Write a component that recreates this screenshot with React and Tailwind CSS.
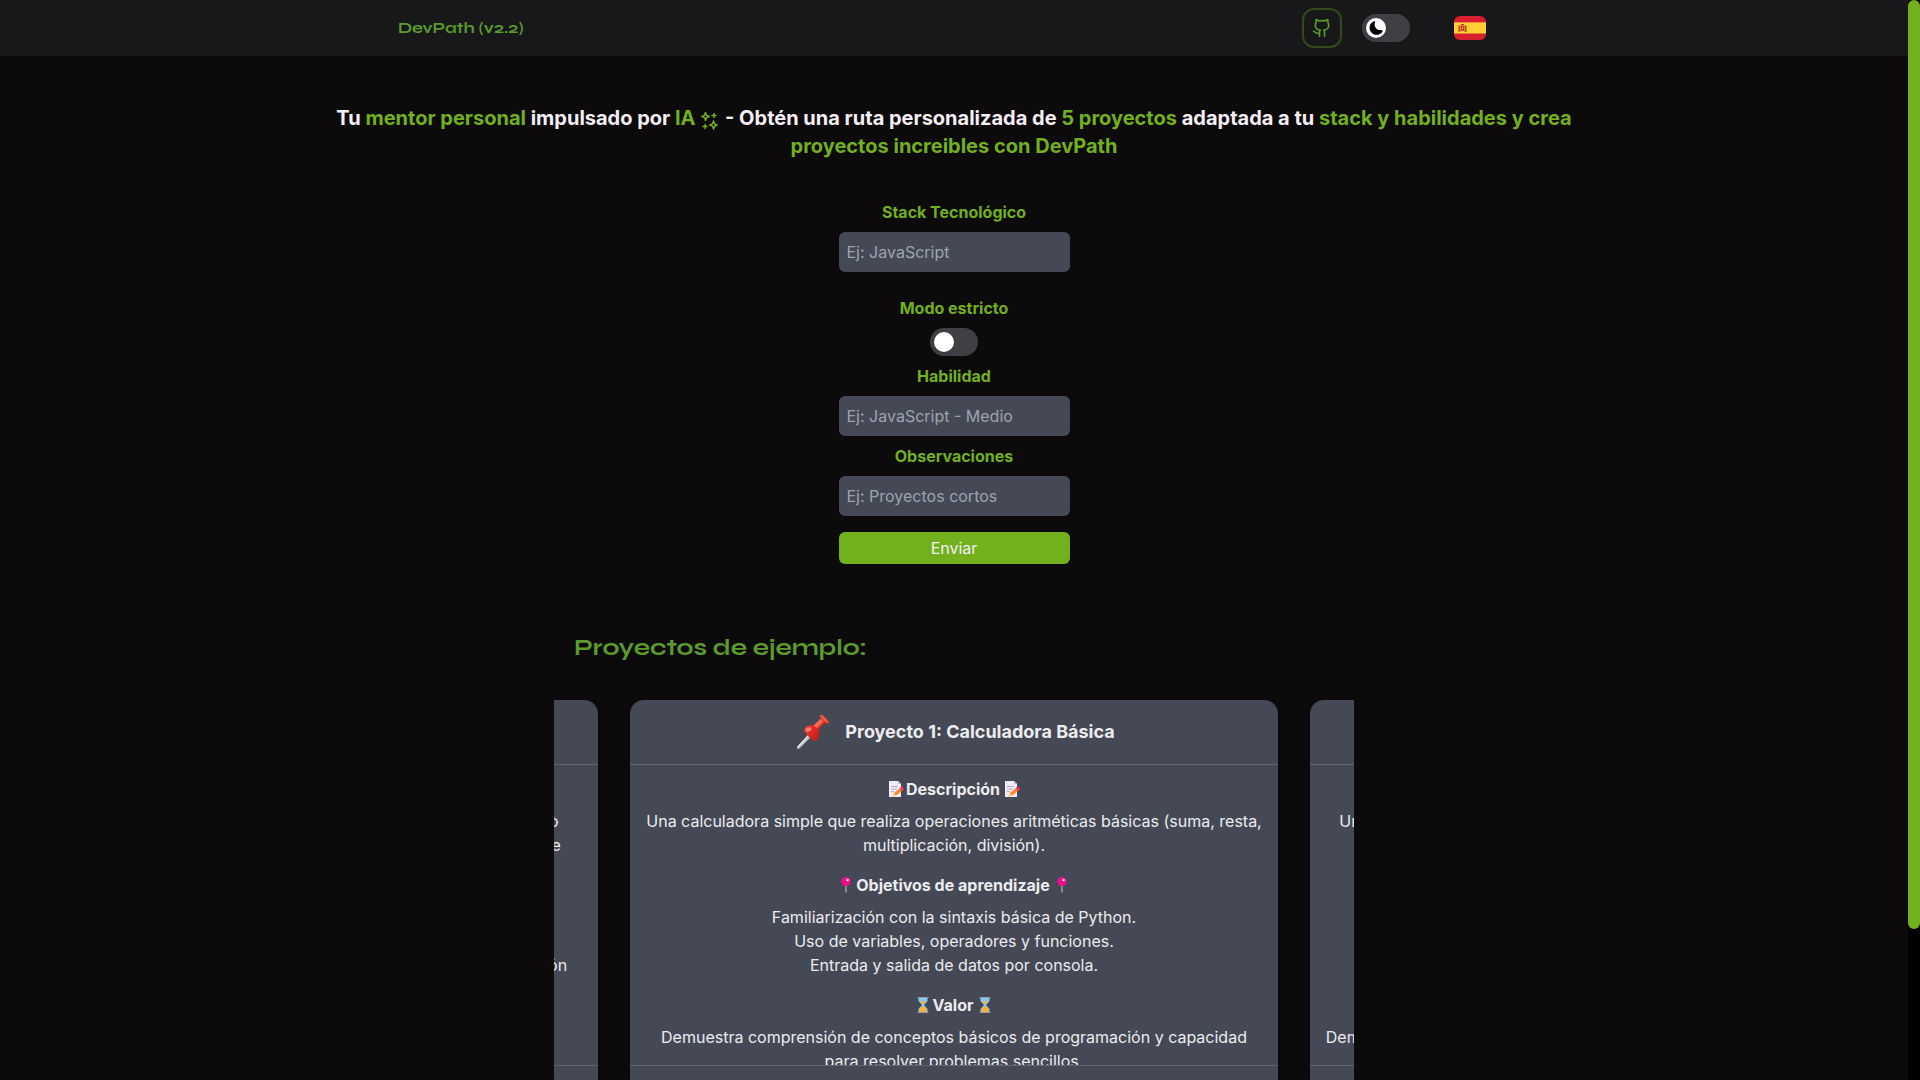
import React from "react";

function GithubIcon() {
  return (
    <svg viewBox="0 0 24 24" className="size-5" fill="none" stroke="currentColor" strokeWidth="2" strokeLinecap="round" strokeLinejoin="round" aria-hidden="true">
      <path d="M15 22v-4a4.8 4.8 0 0 0-1-3.5c3 0 6-2 6-5.5.08-1.25-.27-2.48-1-3.5.28-1.15.28-2.35 0-3.5 0 0-1 0-3 1.500-2.640-.5-5.360-.5-8 0C6 2 5 2 5 2c-.3 1.150-.3 2.350 0 3.500A5.403 5.403 0 0 0 4 9c0 3.500 3 5.500 6 5.500-.390.490-.680 1.050-.850 1.650-.170.600-.220 1.230-.150 1.850v4" />
      <path d="M9 18c-4.510 2-5-2-7-2" />
    </svg>
  );
}

function MoonIcon() {
  return (
    <svg viewBox="0 0 24 24" className="size-4 text-black" fill="currentColor" aria-hidden="true">
      <path d="M21.5 15.4c-.2-.3-.7-.7-1.8-.5-.6.1-1.2.2-1.9.1-2.3-.1-4.4-1.2-5.8-2.8-1.3-1.4-2.1-3.3-2.1-5.3 0-1.100.2-2.200.7-3.200.4-1 .1-1.500-.1-1.700-.2-.2-.7-.5-1.800-.1C4.600 3.700 1.900 7.900 2.300 12.400c.3 4.300 3.300 7.900 7.200 9.300 1 .3 1.900.5 2.900.5h.5c3.400 0 6.500-1.600 8.500-4.300.7-.9.5-1.500.1-1.800z" />
    </svg>
  );
}

function SpainFlag() {
  return (
    <svg viewBox="0 0 32 24" className="h-6 w-8 rounded-md" role="img" aria-label="Español">
      <rect width="32" height="24" fill="#d81e2f" />
      <rect y="6" width="32" height="12" fill="#ffd033" />
      <rect y="6" width="32" height="1" fill="#f08a4c" />
      <rect y="17" width="32" height="1" fill="#e87c30" />
      <path d="M4.500 9.500h1.500V15H4.500zM11 9.500h1.500V15H11z" fill="#b5481f" />
      <path d="M7 8h3v1H7zM6.500 9.500h4V13a2 2 0 0 1-4 0z" fill="#c8322c" />
      <path d="M8 11h1v2H8z" fill="#ffd033" />
      <path d="M4 14.500h3v1H4zM10 14.500h3v1h-3z" fill="#b5481f" />
    </svg>
  );
}

function Sparkles() {
  return (
    <svg viewBox="0 0 20 20" className="inline size-5 align-[-5px]" fill="none" stroke="currentColor" strokeWidth="1.500" strokeLinejoin="round" strokeLinecap="round" aria-hidden="true">
      <path d="M5.500 2.500 6.600 5.400 9.200 6.500 6.600 7.600 5.500 10.500 4.400 7.600 1.800 6.500 4.400 5.400Z" />
      <path d="M13.500 11 14.600 13.900 17.200 15 14.600 16.100 13.500 19 12.400 16.100 9.800 15 12.400 13.900Z" />
      <path d="M14 3.500v4M12 5.500h4M5 14.500v4M3 16.500h4" />
    </svg>
  );
}

function Pushpin() {
  return (
    <svg viewBox="0 0 40 40" className="size-10 shrink-0" aria-hidden="true">
      <defs>
        <linearGradient id="pin-red" x1="0" y1="0" x2="1" y2="1">
          <stop offset="0" stopColor="#f4553f" />
          <stop offset=".5" stopColor="#dc2a22" />
          <stop offset="1" stopColor="#9f1013" />
        </linearGradient>
      </defs>
      <path d="M16.500 21.500 19 24 6.500 36.500 4 37 4.500 34.500Z" fill="#b9bcbc" />
      <path d="M16.500 21.500 17.500 22.500 4.500 36.500 4.500 34.500Z" fill="#ececea" />
      <path d="M11 17.500c1.500-3.500 5.500-5 9.500-4l7-6.500-.5-3.500c.5-1.500 2.500-.5 5 2s4.500 5 3.500 6l-4.500 0-5.500 6.500c1.500 4 .5 8.500-2.500 11-2 .5-5-1.500-7.500-4.500s-4.500-5-4.500-7z" fill="url(#pin-red)" />
      <path d="M20.500 13.500l7-6.500 3 2.500-6.500 6.500z" fill="#f26a51" />
      <path d="M27 3.500c1 2.500 4.500 6.500 8.500 8 1-1-1-3.500-3.500-6s-4.500-3.500-5-2z" fill="#ef5a46" />
      <ellipse cx="15.500" cy="17.500" rx="3" ry="2" fill="#f77d68" transform="rotate(-20 15.500 17.500)" />
    </svg>
  );
}

function Memo() {
  return (
    <svg viewBox="0 0 16 16" className="size-4 shrink-0" aria-hidden="true">
      <path d="M1 0h9l3 3v13H1z" fill="#f3eaf8" />
      <path d="M10 0v3h3z" fill="#c9b8d6" />
      <path d="M3 5.500h7M3 8h6M3 10.500h3" stroke="#b8abc4" strokeWidth="1" />
      <path d="M11.500 7.500 14 10 8 14.500 4.500 15.500 6 12Z" fill="#ff8a24" />
      <path d="M4.500 15.500 6 12l2 2.500z" fill="#ffd29a" />
      <path d="M11.500 7.500c1-2 2.500-2 3.500-1s1 2-.5 3.500z" fill="#f92f60" />
    </svg>
  );
}

function RoundPin() {
  return (
    <svg viewBox="0 0 16 16" className="size-4 shrink-0" aria-hidden="true">
      <path d="M8 8v7.500" stroke="#c8c3cc" strokeWidth="1" />
      <circle cx="8" cy="4.500" r="4.500" fill="#f70a8d" />
      <circle cx="9.500" cy="3" r="1.300" fill="#ffd9ee" />
    </svg>
  );
}

function Hourglass() {
  return (
    <svg viewBox="0 0 16 16" className="size-4 shrink-0" aria-hidden="true">
      <path d="M3.500 1h9v3L9 8l3.500 4v3h-9v-3L7 8 3.500 4z" fill="#83cbff" />
      <path d="M5 4h6L8 7.500zM8 8.500l3.500 3.500v3h-7v-3z" fill="#ffb02e" />
      <path d="M2.500 .5h11M2.500 15.500h11" stroke="#9b9ba5" strokeWidth="1" />
    </svg>
  );
}

const projects = [
  {
    title: "Proyecto 5: Gestor de Tareas",
    description: ["Una aplicación de consola que permite crear, editar y ver tareas guardando", "cada cambio en un archivo local para poder recuperar la lista luego siempre"],
    goals: ["Lectura y escritura de archivos.", "Estructuras de datos.", "Diseño de programas modulares con manejo de errores, pruebas y validación"],
    value: ["Demuestra organización del código."],
  },
  {
    title: "Proyecto 1: Calculadora Básica",
    description: ["Una calculadora simple que realiza operaciones aritméticas básicas (suma, resta, multiplicación, división)."],
    goals: ["Familiarización con la sintaxis básica de Python.", "Uso de variables, operadores y funciones.", "Entrada y salida de datos por consola."],
    value: ["Demuestra comprensión de conceptos básicos de programación y capacidad para resolver problemas sencillos."],
  },
  {
    title: "Proyecto 2: Adivina el Número",
    description: ["Un juego donde el usuario intenta adivinar un número generado al azar por un", "ordenador."],
    goals: ["Uso de bucles y condicionales.", "Generación de números aleatorios.", "Validación de la entrada."],
    value: ["Demuestra habilidad para implementar lógica de control y manejo de las entradas", "del usuario."],
  },
];

function Section({ icon: Icon, title, lines }) {
  return (
    <section className="mb-4">
      <h4 className="mb-2 flex items-center justify-center font-bold">
        <Icon />
        <span className="mr-1 ml-0.5">{title}</span>
        <Icon />
      </h4>
      {lines.map((line) => (
        <p key={line}>{line}</p>
      ))}
    </section>
  );
}

function ProjectCard({ project }) {
  return (
    <article className="w-[648px] shrink-0 overflow-hidden rounded-[14px] bg-[#454955] text-center text-[#ececee] shadow-lg">
      <header className="flex items-center justify-center gap-3 p-3">
        <Pushpin />
        <h3 className="text-lg font-bold">{project.title}</h3>
      </header>
      <div className="h-[302px] overflow-hidden border-y border-[#636773] p-3">
        <Section icon={Memo} title="Descripción" lines={project.description} />
        <Section icon={RoundPin} title="Objetivos de aprendizaje" lines={project.goals} />
        <Section icon={Hourglass} title="Valor" lines={project.value} />
      </div>
      <footer className="h-16 p-3">Python</footer>
    </article>
  );
}

function Switch({ label, id, children }) {
  return (
    <span className="relative flex h-7 w-12 items-center rounded-full bg-[#3f3f46] px-1">
      <input id={id} type="checkbox" role="switch" aria-label={label} className="peer absolute inset-0 cursor-pointer appearance-none rounded-full" />
      <span className="pointer-events-none flex size-5 items-center justify-center rounded-full bg-white shadow peer-checked:ml-auto">{children}</span>
    </span>
  );
}

function Field({ id, label, placeholder }) {
  return (
    <>
      <label htmlFor={id} className="mb-2 font-bold text-[#72b01d]">{label}</label>
      <input id={id} placeholder={placeholder} className="mb-2 h-10 w-full rounded-md bg-[#454955] px-2 text-white placeholder:text-[#9ca3af]" />
    </>
  );
}

export default function App() {
  return (
    <div className="flex h-screen overflow-hidden bg-[#0d0a0b] font-['Inter',sans-serif] text-base text-[#f3eff5]">
      <div className="min-w-0 flex-1">
        <nav className="bg-[#18181b]">
          <div className="mx-auto flex h-14 max-w-[1112px] items-center justify-between pr-6 text-[#5b9b2d]">
            <a href="#inicio" className="font-['Syne','DejaVu_Sans',sans-serif] text-base font-bold">DevPath (v2.2)</a>
            <div className="flex items-center">
              <a href="#github" aria-label="GitHub" className="flex size-10 items-center justify-center rounded-xl border-2 border-[#32481d]">
                <GithubIcon />
              </a>
              <div className="mr-11 ml-5">
                <Switch id="tema" label="Tema oscuro">
                  <MoonIcon />
                </Switch>
              </div>
              <button type="button" aria-label="Idioma">
                <SpainFlag />
              </button>
            </div>
          </div>
        </nav>

        <main className="flex flex-col items-center">
          <h1 className="mt-12 w-2/3 text-center text-xl font-bold [&>span]:text-[#72b01d]">
            Tu <span>mentor personal</span> impulsado por <span>IA <Sparkles /></span> - Obtén una ruta personalizada de <span>5 proyectos</span> adaptada a tu <span>stack y habilidades y crea proyectos increibles con DevPath</span>
          </h1>

          <form className="mt-10 flex w-[231px] flex-col items-center" onSubmit={(e) => e.preventDefault()}>
            <Field id="stack" label="Stack Tecnológico" placeholder="Ej: JavaScript" />
            <label htmlFor="estricto" className="mt-4 mb-2 font-bold text-[#72b01d]">Modo estricto</label>
            <div className="mb-2">
              <Switch id="estricto" label="Modo estricto" />
            </div>
            <Field id="habilidad" label="Habilidad" placeholder="Ej: JavaScript - Medio" />
            <Field id="observaciones" label="Observaciones" placeholder="Ej: Proyectos cortos" />
            <button type="submit" className="mt-2 h-8 w-full rounded-md bg-[#72b01d] text-[#f3eff5]">Enviar</button>
          </form>

          <section className="mt-[68px] w-[800px]">
            <h2 className="ml-5 font-['Syne','DejaVu_Sans',sans-serif] text-2xl font-bold text-[#5b9b2d]">Proyectos de ejemplo:</h2>
            <div className="mt-9 flex justify-center gap-8 overflow-hidden">
              {projects.map((project) => (
                <ProjectCard key={project.title} project={project} />
              ))}
            </div>
          </section>
        </main>
      </div>

      <div className="w-3 shrink-0 bg-black" aria-hidden="true">
        <div className="h-[86%] rounded-full bg-[#72b01d]" />
      </div>
    </div>
  );
}
